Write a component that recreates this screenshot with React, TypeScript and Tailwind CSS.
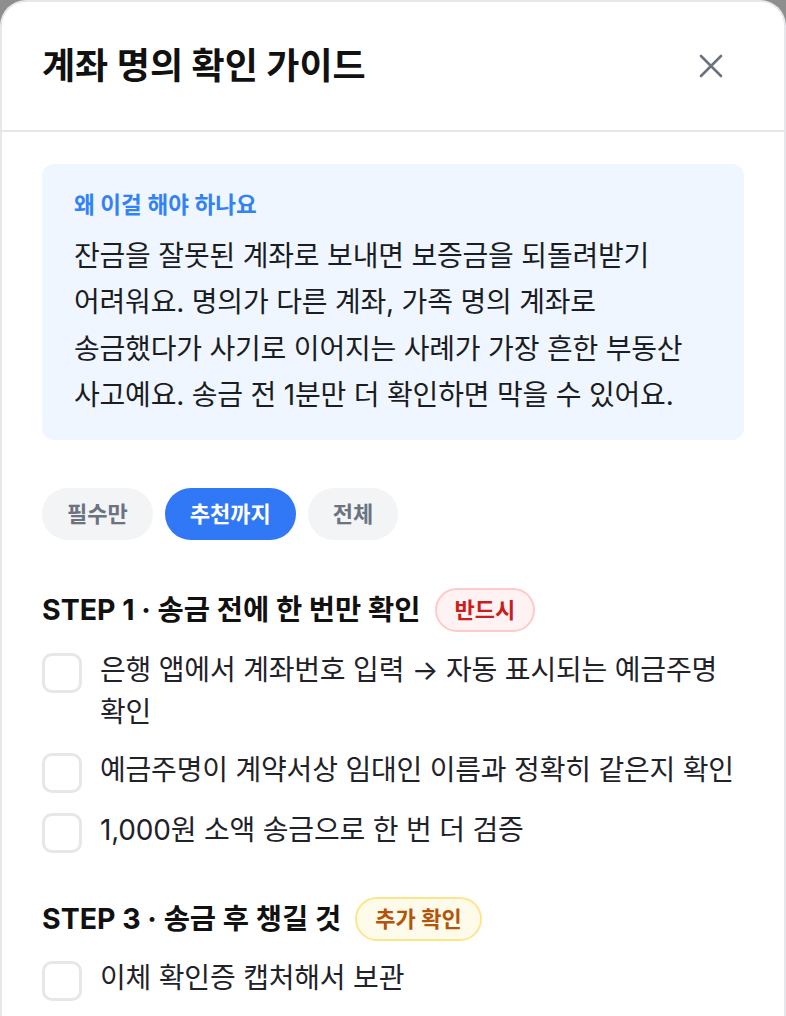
import React, { useState } from 'react';

const FONT = { fontFamily: 'Inter, "Noto Sans CJK KR", "Noto Sans", sans-serif' };

type Item = { id: string; text: string };

const STEP1: Item[] = [
  { id: 'a', text: '은행 앱에서 계좌번호 입력 → 자동 표시되는 예금주명 확인' },
  { id: 'b', text: '예금주명이 계약서상 임대인 이름과 정확히 같은지 확인' },
  { id: 'c', text: '1,000원 소액 송금으로 한 번 더 검증' },
];

const STEP3: Item[] = [{ id: 'd', text: '이체 확인증 캡처해서 보관' }];

const TABS = ['필수만', '추천까지', '전체'];

const CheckRow = ({ item, checked, onToggle }: { item: Item; checked: boolean; onToggle: () => void }) => (
  <label className="flex items-start gap-[18px] cursor-pointer">
    <button
      type="button"
      onClick={onToggle}
      className={`mt-[4px] w-[40px] h-[40px] shrink-0 rounded-[10px] border-[3px] ${
        checked ? 'bg-[#3178f6] border-[#3178f6]' : 'bg-white border-[#e5e7eb]'
      }`}
    />
    <span className="text-[28px] leading-[42px] tracking-[-0.2px] text-[#1f2329] break-keep">{item.text}</span>
  </label>
);

const Badge = ({ tone, children }: { tone: 'red' | 'amber'; children: React.ReactNode }) => (
  <span
    className={`inline-flex items-center h-[44px] px-[18px] rounded-full border-2 text-[22px] font-semibold ${
      tone === 'red'
        ? 'bg-[#fef2f2] border-[#fecaca] text-[#c81e1e]'
        : 'bg-[#fffbeb] border-[#fde68a] text-[#b45309]'
    }`}
  >
    {children}
  </span>
);

export default function App() {
  const [tab, setTab] = useState(1);
  const [checked, setChecked] = useState<Record<string, boolean>>({});
  const toggle = (id: string) => setChecked(c => ({ ...c, [id]: !c[id] }));

  return (
    <div className="h-[1016px] overflow-hidden bg-[#8e8e8e]" style={FONT}>
      <div className="bg-white rounded-t-[26px] border-2 border-b-0 border-[#e5e7eb] min-h-[1016px]">
        {/* Header */}
        <div className="h-[130px] flex items-center justify-between pl-[40px] pr-[49px] border-b-2 border-[#e5e7eb]">
          <h1 className="text-[36px] leading-[44px] font-bold text-[#111111]">계좌 명의 확인 가이드</h1>
          <button type="button" className="w-[48px] h-[48px] flex items-center justify-center text-[#6b7280]">
            <svg width="24" height="24" viewBox="0 0 24 24" fill="none" stroke="currentColor" strokeWidth="2.6" strokeLinecap="round">
              <path d="M2 2 L22 22 M22 2 L2 22" />
            </svg>
          </button>
        </div>

        <div className="px-[40px] pt-[32px]">
          {/* Why box */}
          <div className="bg-[#eff6ff] rounded-[12px] pl-[32px] pr-[30px] pt-[26px] pb-[22px]">
            <div className="text-[22.5px] leading-[30px] font-semibold text-[#3182f6]">왜 이걸 해야 하나요</div>
            <p className="mt-[13px] text-[28px] leading-[46.3px] tracking-[-0.2px] text-[#1a1d22] break-keep">
              잔금을 잘못된 계좌로 보내면 보증금을 되돌려받기 어려워요. 명의가 다른 계좌, 가족 명의 계좌로
              송금했다가 사기로 이어지는 사례가 가장 흔한 부동산 사고예요. 송금 전 1분만 더 확인하면 막을 수 있어요.
            </p>
          </div>

          {/* Filter tabs */}
          <div className="mt-[48px] flex gap-[12px]">
            {TABS.map((t, i) => (
              <button
                key={t}
                type="button"
                onClick={() => setTab(i)}
                className={`h-[52px] px-[25px] rounded-full text-[22px] font-semibold ${
                  tab === i ? 'bg-[#3178f6] text-white' : 'bg-[#f3f4f6] text-[#6b7280]'
                }`}
              >
                {t}
              </button>
            ))}
          </div>

          {/* Step 1 */}
          <section className="mt-[48px]">
            <div className="flex items-center gap-[14px] h-[44px]">
              <h2 className="text-[28.5px] font-bold text-[#111111]">STEP 1 · 송금 전에 한 번만 확인</h2>
              <Badge tone="red">반드시</Badge>
            </div>
            <div className="mt-[17px] flex flex-col gap-[16px]">
              {STEP1.map(it => (
                <CheckRow key={it.id} item={it} checked={!!checked[it.id]} onToggle={() => toggle(it.id)} />
              ))}
            </div>
          </section>

          {/* Step 3 */}
          <section className="mt-[43px]">
            <div className="flex items-center gap-[14px] h-[46px]">
              <h2 className="text-[28.5px] font-bold text-[#111111]">STEP 3 · 송금 후 챙길 것</h2>
              <Badge tone="amber">추가 확인</Badge>
            </div>
            <div className="mt-[15px] flex flex-col gap-[16px]">
              {STEP3.map(it => (
                <CheckRow key={it.id} item={it} checked={!!checked[it.id]} onToggle={() => toggle(it.id)} />
              ))}
            </div>
          </section>
        </div>
      </div>
    </div>
  );
}
